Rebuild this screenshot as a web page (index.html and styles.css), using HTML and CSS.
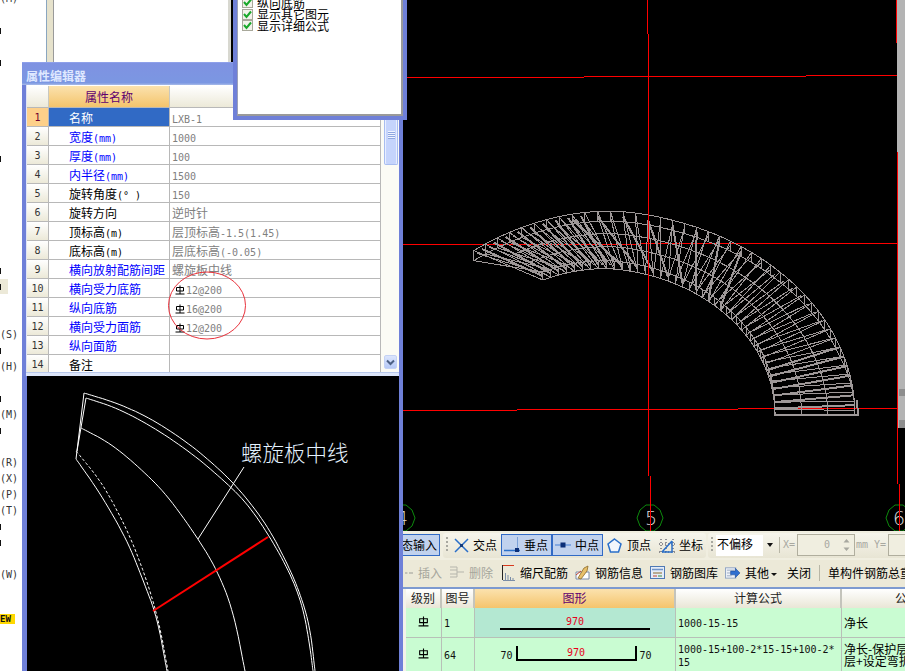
FILE: index.html
```html
<!DOCTYPE html>
<html lang="zh">
<head>
<meta charset="utf-8">
<title>属性编辑器</title>
<link rel="stylesheet" href="styles.css">
</head>
<body>
<svg class="defs" width="0" height="0" aria-hidden="true">
  <symbol id="grade" viewBox="0 0 10 10"><path d="M5 .5V9M1.500 2.500H8.500V6H1.500ZM.5 9H9.500" fill="none" stroke="#000" stroke-width="1"/></symbol>
</svg>
<div class="app">
  <section class="left">
    <div class="strip">
      <div class="m">(M)</div><div class="m"></div><div class="m"><i></i></div><div class="m"></div><div class="m"><i></i></div>
      <div class="m"></div><div class="m"></div><div class="m"></div><div class="m"></div><div class="m"></div>
      <div class="m"><i></i></div><div class="m"></div><div class="m"></div><div class="m"></div><div class="m"></div>
      <div class="m"></div><div class="m"></div><div class="m"><i></i></div><div class="m hot"><i></i></div><div class="m"></div>
      <div class="m"></div><div class="m">(S)</div><div class="m"><i></i></div><div class="m">(H)</div><div class="m"></div>
      <div class="m"><i></i></div><div class="m">(M)</div><div class="m"><i></i></div><div class="m"></div><div class="m">(R)</div>
      <div class="m">(X)</div><div class="m">(P)</div><div class="m">(T)</div><div class="m"><i></i></div><div class="m"><i></i></div>
      <div class="m"></div><div class="m">(W)</div><div class="m"></div><div class="m short"></div><div class="m"><b class="ew">EW</b></div>
    </div>

    <div class="backpanel"><div class="backwhite"></div></div>

    <div class="propwin">
      <div class="title">属性编辑器</div>
      <div class="gridarea">
        <table class="props">
          <colgroup><col class="c-num"><col class="c-name"><col class="c-val"></colgroup>
          <tr class="hd"><th class="corner"></th><th class="hd-on">属性名称</th><th></th></tr>
          <tr><td class="n n-on">1</td><td class="k k-on">名称</td><td class="v"><span class="l">LXB-1</span></td></tr>
          <tr><td class="n">2</td><td class="k blue">宽度<span class="l">(mm)</span></td><td class="v"><span class="l">1000</span></td></tr>
          <tr><td class="n">3</td><td class="k blue">厚度<span class="l">(mm)</span></td><td class="v"><span class="l">100</span></td></tr>
          <tr><td class="n">4</td><td class="k blue">内半径<span class="l">(mm)</span></td><td class="v"><span class="l">1500</span></td></tr>
          <tr><td class="n">5</td><td class="k">旋转角度<span class="l">(° )</span></td><td class="v"><span class="l">150</span></td></tr>
          <tr><td class="n">6</td><td class="k">旋转方向</td><td class="v">逆时针</td></tr>
          <tr><td class="n">7</td><td class="k">顶标高<span class="l">(m)</span></td><td class="v">层顶标高<span class="l">-1.5(1.45)</span></td></tr>
          <tr><td class="n">8</td><td class="k">底标高<span class="l">(m)</span></td><td class="v">层底标高<span class="l">(-0.05)</span></td></tr>
          <tr><td class="n">9</td><td class="k blue">横向放射配筋间距</td><td class="v">螺旋板中线</td></tr>
          <tr><td class="n">10</td><td class="k blue">横向受力底筋</td><td class="v"><svg class="gr"><use href="#grade"/></svg><span class="l">12@200</span></td></tr>
          <tr><td class="n">11</td><td class="k blue">纵向底筋</td><td class="v"><svg class="gr"><use href="#grade"/></svg><span class="l">16@200</span></td></tr>
          <tr><td class="n">12</td><td class="k blue">横向受力面筋</td><td class="v"><svg class="gr"><use href="#grade"/></svg><span class="l">12@200</span></td></tr>
          <tr><td class="n">13</td><td class="k blue">纵向面筋</td><td class="v"></td></tr>
          <tr><td class="n">14</td><td class="k">备注</td><td class="v"></td></tr>
        </table>
        <div class="vscroll">
          <div class="thumb"><span></span><span></span><span></span><span></span></div>
          <div class="spacer"></div>
          <div class="down"><svg width="9" height="7" viewBox="0 0 9 7"><path d="M1 1.500L4.500 5L8 1.500" fill="none" stroke="#4d6185" stroke-width="2"/></svg></div>
        </div>
        <svg class="ring" width="80" height="70" viewBox="0 0 80 70"><ellipse cx="40" cy="34.500" rx="38.500" ry="33.500" fill="none" stroke="#e9323c" stroke-width="1"/></svg>
      </div>
      <div class="split"></div>
      <svg class="preview" viewBox="27 376 372 295" width="372" height="295">
        <g fill="none" stroke="#fff" stroke-width="1">
          <polyline class="smooth" points="84,393 117,403 150,418 187,442 217,467 240,490 267,525 287,563 300,593 310,627 315,671"/>
          <polyline class="smooth" points="86,398 117,408 153,427 190,452 220,477 247,503 270,537 290,573 303,607 310,647 313,671"/>
          <polyline points="84,393 76,459"/>
          <polyline points="86,398 77,451"/>
          <polyline class="smooth" points="81,428 110,443 140,468 167,495 197,537 217,570 233,610 245,671"/>
          <polyline class="smooth" points="76,459 100,493 127,540 143,580 157,617 167,671"/>
          <polyline class="smooth" stroke-dasharray="3 2" points="76,451 100,480 117,510 133,543 150,590 160,627 168,671"/>
          <line x1="244" y1="467" x2="198" y2="539"/>
        </g>
        <line x1="153" y1="611" x2="268" y2="537" stroke="#ff0000" stroke-width="2"/>
        <text class="anno" x="241" y="461">螺旋板中线</text>
      </svg>
    </div>
  </section>

  <section class="right">
    <svg id="cad" class="cad" viewBox="403 0 502 531" width="502" height="531">
      <rect x="897" y="0" width="8" height="428" fill="#b4b4b4"/>
      <rect x="899" y="389" width="6" height="7" fill="#8e8e8e"/>
      <rect x="899" y="420" width="6" height="8" fill="#8e8e8e"/>
      <g stroke="#ff0000" stroke-width="1" shape-rendering="crispEdges" fill="none">
        <path d="M403 77.500H584M584 76.500H806M806 75.500H897"/>
        <path d="M403 244.500H640M640 243.500H897"/>
        <path d="M403 410.500H517M517 409.500H738M738 408.500H897"/>
        <path d="M647.500 0V34M648.500 34V476M650.500 476V531"/>
        <path d="M896.500 0V43M897.500 152V484M899.500 484V531"/>
      </g>
      <g id="wire" fill="none" stroke="#9e9898" stroke-width="1" shape-rendering="crispEdges"></g>
      <path d="M648.500 200V290" stroke="#ff0000" stroke-width="1" shape-rendering="crispEdges"/>
      <g fill="none" stroke="#0d8a0d" stroke-width="1">
        <polygon points="415,518 412,526 406,531 398,531 392,526 389,518 392,510 398,505 406,505 412,510"/>
        <polygon points="663,518 660,526 654,531 646,531 640,526 637,518 640,510 646,505 654,505 660,510"/>
        <polygon points="912,518 909,526 903,531 895,531 889,526 886,518 889,510 895,505 903,505 909,510"/>
      </g>
      <g class="axis">
        <text x="396" y="525">4</text>
        <text x="645" y="525">5</text>
        <text x="893" y="525">6</text>
      </g>
      <path d="M650.500 476V531M899.500 484V531" stroke="#ff0000" stroke-width="1" shape-rendering="crispEdges"/>
    </svg>

    <div class="tb1">
      <div class="on clipped">动态输入</div>
      <div class="grp g1">
        <span class="grip"></span>
        <div class="tool t-cross">
          <svg width="15" height="15" viewBox="0 0 15 15"><path d="M1 1L14 14M14 1L1 14" stroke="#2a6fc9" stroke-width="1.500"/><rect x="6" y="6" width="3" height="3" fill="#123a7a"/></svg>交点
        </div>
        <div class="tool on t-on first">
          <svg width="16" height="16" viewBox="0 0 16 16"><path d="M0 13.500H16" stroke="#2a6fc9" stroke-width="1.500"/><path d="M13.500 0V13" stroke="#7aa0d8" stroke-width="1"/><rect x="11" y="11" width="4" height="4" fill="#0c2f78"/></svg>垂点
        </div>
        <div class="tool on t-on">
          <svg width="16" height="16" viewBox="0 0 16 16"><path d="M0 8H16" stroke="#6d9ade" stroke-width="1.500"/><rect x="5.500" y="5.500" width="5" height="5" fill="#0c2f78"/></svg>中点
        </div>
        <div class="tool t-pent">
          <svg width="15" height="15" viewBox="0 0 15 15"><path d="M7.500 1L14 6L11.500 14H3.500L1 6Z" fill="#f3f6fb" stroke="#2a6fc9" stroke-width="1.500"/></svg>顶点
        </div>
        <div class="tool t-coord">
          <svg width="16" height="17" viewBox="0 0 16 17"><path d="M2 2V15M7 2V15M14 2V15M0 15H16M0 7H16" stroke="#334" stroke-width="1" stroke-dasharray="1 2"/><path d="M3 15L13 4M3 15H14M13 4V14" fill="none" stroke="#2a6fc9" stroke-width="1.500"/></svg>坐标
        </div>
      </div>
      <div class="grp g2">
        <span class="grip"></span>
        <div class="select">不偏移</div>
        <div class="caret"></div>
        <span class="vsep"></span>
        <span class="dim l xlabel">X=</span>
        <div class="num"><span class="numv l">0</span><span class="spin"><svg width="7" height="14" viewBox="0 0 7 14"><path d="M3.500 1L6.500 4.500H.5ZM3.500 13L.5 9.500H6.500Z" fill="#a8a8a0"/></svg></span></div>
        <span class="dim l mm">mm</span>
        <span class="dim l ylabel">Y=</span>
        <div class="num"></div>
      </div>
    </div>

    <div class="tb2">
      <div class="it off">
        <svg class="i8" width="8" height="14" viewBox="0 0 10 14"><path d="M0 7H3M5 7H10" stroke="#b5b5ac" stroke-width="2"/></svg>插入
      </div>
      <div class="it off">
        <svg width="15" height="15" viewBox="0 0 15 15"><path d="M1 2H8V12H1M1 5H8M1 9H8M8 7H15" fill="none" stroke="#b5b5ac" stroke-width="1"/></svg>删除
      </div>
      <div class="it">
        <svg width="15" height="17" viewBox="0 0 15 17"><path d="M2.500 1V16" stroke="#222"/><path d="M3 1.500H14" stroke="#d83a1e"/><path d="M5.500 9V16M8 11V16M10.500 13V16M13 14V16M3 16.500H15" stroke="#7a8da8"/></svg>缩尺配筋
      </div>
      <div class="it">
        <svg width="15" height="15" viewBox="0 0 15 15"><path d="M1 7H14V14H1Z" fill="#fff" stroke="#7d8ca8"/><path d="M3 13L9 3L13 1L12 6L6 14Z" fill="#e8c06a" stroke="#8c6a2a" stroke-width=".8"/><path d="M1 10L6 6" stroke="#c2452e"/></svg>钢筋信息
      </div>
      <div class="it">
        <svg width="15" height="15" viewBox="0 0 15 15"><rect x=".5" y="1.500" width="14" height="12" fill="#e4ecf8" stroke="#4f79b4"/><path d="M2 4.500H13" stroke="#6f93c8" stroke-width="1.500"/><path d="M3 8H12" stroke="#8a6a2a"/><path d="M3 11H7" stroke="#c2452e"/><path d="M8 11H12" stroke="#3a8a3a"/></svg>钢筋图库
      </div>
      <div class="it">
        <svg class="i16" width="15" height="15" viewBox="0 0 16 15"><rect x=".5" y="2.500" width="11" height="11" fill="#eef2f8" stroke="#8fa3c2"/><path d="M2 5H10M2 8H7M2 11H7" stroke="#9aa9c0"/><path d="M6 6H11V3L16 8L11 13V10H6Z" fill="#2f6fd0" stroke="#1d4a94" stroke-width=".6"/></svg><span>其他<span class="tri"></span></span>
      </div>
      <div class="it close">关闭</div>
      <span class="bar"></span>
      <div class="it total">单构件钢筋总重</div>
    </div>

    <div class="rebar">
      <table class="bars">
        <colgroup><col class="b1"><col class="b2"><col class="b3"><col class="b4"><col class="b5"></colgroup>
        <tr class="bh"><th>级别</th><th>图号</th><th class="bh-on">图形</th><th>计算公式</th><th>公式描述</th></tr>
        <tr class="r1">
          <td class="ctr"><svg class="gr gr-b"><use href="#grade"/></svg></td><td><span class="l d">1</span></td>
          <td class="sel"><div class="shape"><span class="l red">970</span><div class="stick"></div></div></td>
          <td><span class="l d">1000-15-15</span></td><td>净长</td>
        </tr>
        <tr class="r2">
          <td class="ctr"><svg class="gr gr-b"><use href="#grade"/></svg></td><td><span class="l d">64</span></td>
          <td><div class="shape2"><span class="l d">70</span><div class="bracket"><span class="l red">970</span></div><span class="l d">70</span></div></td>
          <td class="wrap"><span class="l d">1000-15+100-2*15-15+100-2*<br>15</span></td>
          <td class="wrap">净长-保护层<br>层+设定弯折</td>
        </tr>
      </table>
    </div>
  </section>

  <aside class="dialog">
    <div class="dialog-in">
      <label class="chk"><span class="box"><svg width="9" height="9" viewBox="0 0 9 9"><path d="M1 4L3.500 7L8 1.500" fill="none" stroke="#19a82a" stroke-width="2"/></svg></span>纵向底筋</label>
      <label class="chk"><span class="box"><svg width="9" height="9" viewBox="0 0 9 9"><path d="M1 4L3.500 7L8 1.500" fill="none" stroke="#19a82a" stroke-width="2"/></svg></span>显示其它图元</label>
      <label class="chk"><span class="box"><svg width="9" height="9" viewBox="0 0 9 9"><path d="M1 4L3.500 7L8 1.500" fill="none" stroke="#19a82a" stroke-width="2"/></svg></span>显示详细公式</label>
    </div>
  </aside>
</div>
<script src="wire.js"></script>
</body>
</html>
```
FILE: styles.css
```css
* { box-sizing: border-box; }
html, body { margin: 0; padding: 0; background: #000; }
body { width: 905px; height: 671px; overflow: hidden; font: 12px/14px "Noto Sans CJK SC", "Liberation Sans", sans-serif; color: #000; }
.defs { position: absolute; }
.l { font-family: "DejaVu Sans Mono", "Liberation Mono", monospace; font-size: 10px; line-height: 10px; }

.app { position: relative; display: grid; grid-template-columns: 403px 502px; width: 905px; height: 671px; overflow: hidden; }
.left { position: relative; background: #fff; overflow: hidden; }
.right { display: flex; flex-direction: column; background: #ece9d8; overflow: hidden; }

/* left menu fragments */
.strip { width: 22px; margin-top: -9px; }
.m { height: 16px; width: 22px; line-height: 16px; font-family: "DejaVu Sans Mono", monospace; font-size: 10px; color: #333; position: relative; display: flex; align-items: center; }
.m i { display: block; width: 1px; height: 6px; background: #111; }
.m.hot { background: linear-gradient(#ece9d8, #ece9d8) 0 0 / 8px 15px no-repeat; }
.m.short { height: 12px; }
.ew { background: #ffd800; color: #111; font: bold 9px/10px "DejaVu Sans Mono", monospace; padding: 0 1px 0 0; width: 15px; }

/* window behind */
.backpanel { position: absolute; left: 46px; top: 0; width: 187px; height: 64px; border-left: 1px solid #8aa6c0; background: #e6e2cc; padding-left: 6px; border-right: 2px solid #000; }
.backwhite { height: 100%; background: #fff; border-left: 1px solid #9a9a9a; border-right: 3px solid #d8d8d0; }

/* property window */
.propwin { position: absolute; left: 22px; top: 62px; width: 381px; height: 609px; display: flex; flex-direction: column; background: #6f80d8; border-left: 4px solid #6f80d8; border-right: 4px solid #6f80d8; }
.title { height: 23px; margin: 0 -4px; padding: 6px 0 0 4px; background: linear-gradient(#7f92e2, #7b97e2 90%, #a8bbe8); color: #dfe8ff; font-weight: 700; font-size: 12px; line-height: 14px; border-top: 1px solid #8ea0ea; }
.gridarea { position: relative; display: flex; height: 287px; flex: none; background: #fff; border-left: 1px solid #dfe4f4; padding-top: 1px; overflow: hidden; }
.props { width: 354px; table-layout: fixed; border-collapse: separate; border-spacing: 0; align-self: flex-start; flex: none; }
.c-num { width: 22px; } .c-name { width: 121px; } .c-val { width: 211px; }
.props tr { height: 19px; }
.props .hd { height: 22px; }
.props th { padding: 0; font-weight: 400; background: linear-gradient(#fff, #ece9d8); border-right: 1px solid #c8c8c0; border-bottom: 1px solid #b8b8b8; }
.props .hd-on { background: linear-gradient(#fbe2ae, #f4c46c); color: #5f0070; }
.props td { padding: 2px 0 0; white-space: nowrap; overflow: hidden; height: 19px; border-right: 1px solid #b8b8b8; border-bottom: 1px solid #b8b8b8; line-height: 14px; vertical-align: middle; }
.n { text-align: center; background: linear-gradient(#fff, #ece9d8); font-family: "DejaVu Sans Mono", monospace; font-size: 10px; color: #333; }
.n-on { background: #fdd08a; color: #700030; }
.k { padding-left: 20px !important; }
.k-on { background: #316ac5; color: #fff; }
.blue { color: #0000ff; }
.v { padding-left: 2px !important; color: #808080; }
.gr { width: 10px; height: 10px; vertical-align: -1px; margin: 0 1px 0 3px; }
.vscroll { width: 18px; display: flex; flex-direction: column; background: #fbfbf5; padding: 0 1px 2px 3px; margin-left: 0; }
.thumb { height: 57px; margin-top: 22px; flex: none; background: #c5d4fc; border: 1px solid #a8bdf0; border-top: 0; border-radius: 0 0 2px 2px; display: flex; flex-direction: column; gap: 1px; align-items: center; justify-content: flex-end; padding-bottom: 26px; box-shadow: inset 1px 0 #e8eeff, inset -1px 0 #e8eeff; }
.thumb span { width: 7px; height: 1px; background: #f0f4ff; box-shadow: 0 1px #8fa8e0; }
.spacer { flex: 1; }
.down { height: 14px; margin-right: 1px; margin-bottom: 1px; background: linear-gradient(#dbe5fd, #b6c9f7); border: 1px solid #c4d2f4; border-radius: 2px; display: flex; align-items: center; justify-content: center; }
.ring { position: absolute; left: 140px; top: 186px; }
.split { height: 4px; flex: none; background: #dde6fa; border-top: 1px solid #b8c8ec; }
.preview { display: block; background: #000; flex: none; margin-left: 1px; }
.anno { font-size: 21.500px; fill: #e4f2ff; font-family: "Noto Sans CJK SC", sans-serif; font-weight: 300; }

/* top floating dialog */
.dialog { position: absolute; left: 233px; top: 0; width: 174px; height: 120px; background: #6f80d8; padding: 0 4px 4px 4px; }
.dialog-in { height: 100%; background: #fff; border-right: 2px solid #9a9a9a; border-bottom: 2px solid #9a9a9a; border-left: 1px solid #9aa0b8; padding: 0 0 0 4px; margin-top: 0; overflow: hidden; }
.chk { display: flex; align-items: center; gap: 4px; height: 11.500px; line-height: 12px; font-size: 12px; }
.chk:first-child { margin-top: -3px; }
.box { width: 11px; height: 11px; border: 1px solid #a8a89a; background: #f2f2ea; display: flex; align-items: center; justify-content: center; flex: none; }

/* cad canvas */
.cad { display: block; background: #000; flex: none; }
.axis text { font: 19px "DejaVu Sans", sans-serif; fill: #dcdcdc; font-weight: 300; }

/* toolbars */
.tb1 { height: 29px; flex: none; display: flex; align-items: center; background: #f0eee0; padding-bottom: 1px; overflow: hidden; }
.on { background: #c1d2ee; border: 1px solid #316ac5; height: 22px; }
.clipped { margin-left: -14px; width: 51px; line-height: 20px; border-left: 0; text-align: left; flex: none; padding-left: 0; }
.grp { display: flex; align-items: center; height: 25px; background: linear-gradient(#f6f5ec, #e8e5d4); border-radius: 3px; flex: none; }
.g1 { margin-left: 3px; width: 263px; padding-left: 3px; }
.g2 { margin-left: 2px; flex: 1; padding-left: 3px; }
.grip { width: 2px; height: 16px; flex: none; background: repeating-linear-gradient(#a8a8a0 0 2px, transparent 2px 4px); }
.tool { display: flex; align-items: center; gap: 4px; flex: none; line-height: 20px; }
.t-cross { margin-left: 6px; }
.t-on { width: 51px; padding-left: 2px; }
.t-on.first { margin-left: 4px; }
.t-pent { margin-left: 4px; gap: 5px; }
.t-coord { margin-left: 8px; }
.select { margin-left: 3px; width: 47px; height: 21px; background: #fff; line-height: 17px; padding-left: 1px; flex: none; }
.caret { width: 0; height: 0; margin-left: 4px; border: 3px solid transparent; border-top: 4px solid #111; border-bottom: 0; flex: none; }
.vsep { width: 1px; height: 16px; background: #b8b6a6; margin-left: 6px; flex: none; }
.dim { color: #a8a8a0; flex: none; }
.xlabel { margin-left: 3px; width: 14px; }
.num { width: 58px; height: 22px; margin-left: 0; border: 1px solid #b0ae9e; background: #f0eee0; display: flex; align-items: center; justify-content: flex-end; flex: none; }
.numv { color: #a8a8a0; margin-right: 13px; }
.spin { width: 9px; display: flex; margin-right: 2px; }
.mm { margin-left: 1px; width: 17px; }
.ylabel { margin-left: 1px; width: 14px; }

.tb2 { height: 27px; flex: none; display: flex; align-items: center; gap: 7px; padding: 0 0 2px 2px; background: #ece9d8; overflow: hidden; }
.it { display: flex; align-items: center; gap: 5px; flex: none; line-height: 16px; white-space: nowrap; }
.it svg { overflow: visible; flex: none; }
.off { color: #a6a69c; }
.tri { display: inline-block; width: 0; height: 0; margin-left: 2px; vertical-align: 2px; border: 3px solid transparent; border-top: 3px solid #111; border-bottom: 0; }
.close { margin-left: 3px; }
.bar { width: 1px; height: 16px; background: #b8b6a6; margin-left: 1px; flex: none; }
.total { margin-left: 1px; }

/* rebar table */
.rebar { flex: 1; background: #f4f3ea; border-top: 2px solid #7d9ad0; padding: 0 0 0 3px; overflow: hidden; }
.bars { width: 592px; table-layout: fixed; border-collapse: separate; border-spacing: 0; }
.b1 { width: 36px; } .b2 { width: 33px; } .b3 { width: 201px; } .b4 { width: 166px; } .b5 { width: 156px; }
.bars th { height: 19px; padding: 0 0 2px; font-weight: 400; background: linear-gradient(#fff, #e9e6d6); border-right: 2px solid #c4c4bc; line-height: 16px; color: #222; }
.bars .bh-on { background: linear-gradient(#fbe2ae, #f4c46c); color: #5f0070; }
.bars td { padding: 0 0 0 2px; background: #c9fcd2; border-right: 1px solid #b8c0b8; border-bottom: 1px solid #b8c0b8; overflow: hidden; white-space: nowrap; line-height: 12px; }
.bars .r1 td { height: 30px; }
.bars .r2 td { height: 34px; }
.bars td.sel { background: #b4e8d2; padding: 0; }
.bars td.ctr { text-align: center; padding: 0 0 3px; }
.gr-b { width: 11px; height: 11px; margin: 0; }
.d { color: #111; }
.red { color: #e8001c; }
.shape { width: 150px; margin: 0 auto; text-align: center; line-height: 10px; }
.stick { height: 2px; background: #000; margin-top: 1px; }
.shape2 { display: flex; align-items: flex-end; justify-content: center; gap: 3px; padding-bottom: 3px; }
.bracket { width: 121px; height: 15px; border: 2px solid #000; border-top: 0; text-align: center; line-height: 10px; }
```
FILE: wire.js
```js
(function () {
  var wire = document.getElementById('wire');
  var NS = 'http://www.w3.org/2000/svg';

  function pt(u, r, lift) {
    var deg = (106 + 10 * r) * u;
    var th = deg * Math.PI / 180;
    var cx = 593 - 3 * r, a = 182 + 83 * r, b = 147 + 58 * r;
    var x = cx + a * Math.cos(th);
    var y = 415 - b * Math.sin(th);
    var over = Math.max(0, (deg - 82) / 32);
    y += (10 + 8 * r) * Math.pow(over, 1.6);
    var l = lift || 0;
    return [x, y + l * Math.min(1, u * 6 + (l < 0 ? 0.4 : 0))];
  }
  function add(points, width) {
    var el = document.createElementNS(NS, 'polyline');
    el.setAttribute('points', points.map(function (p) { return p[0].toFixed(1) + ',' + p[1].toFixed(1); }).join(' '));
    if (width) el.setAttribute('stroke-width', width);
    wire.appendChild(el);
  }
  function arc(r, lift, from, to) {
    var pts = [], s = 60;
    for (var i = 0; i <= s; i++) pts.push(pt(from + (to - from) * i / s, r, lift));
    add(pts);
  }

  arc(1, 0, 0, 1);
  arc(1, 10, 0, 1);
  arc(0, 0, 0, 1);
  arc(0, -8, 0, 1);
  arc(0.33, -3, 0, 0.98);
  arc(0.66, 3, 0, 0.98);

  var n = 42;
  for (var i = 0; i <= n; i++) {
    var u = i / n, next = (i + 1) / n;
    add([pt(u, 0, 0), pt(u, 1, 0)], i < 8 ? 2 : 1);
    add([pt(u, 0, 0), pt(u, 0, -8)]);
    add([pt(u, 1, 0), pt(u, 1, 10)]);
    if (i >= n) continue;
    if (u < 0.4) {
      add([pt(u + 0.5 / n, 0, -5), pt(u + 0.5 / n, 1, 5)]);
    } else if (u < 0.78) {
      if (i % 2 === 0) add([pt(u, 0, -4), pt(u + 2 / n, 1, 5)], 2);
      add([pt(next, 0, -2), pt(u, 1, 4)]);
    } else {
      add([pt(u, 0, -8), pt(u, 1, 10)]);
      add([pt(u + 0.5 / n, 0, -4), pt(u + 0.7 / n, 1, 5)]);
      add([pt(next, 0, -4), pt(u + 0.3 / n, 1, 3)], 2);
    }
  }
  add([pt(1, 0, 0), pt(1, 1, 0), pt(1, 1, 10), pt(1, 0, -8)]);
  add([[774, 415], [858, 415], [857, 400]], 2);

  // round off the hand-measured curves of the preview drawing
  var smooth = document.querySelectorAll('.smooth');
  for (var k = 0; k < smooth.length; k++) {
    var line = smooth[k], p = [];
    for (var j = 0; j < line.points.length; j++) p.push([line.points[j].x, line.points[j].y]);
    for (var pass = 0; pass < 3; pass++) {
      var q = [p[0]];
      for (var m = 0; m < p.length - 1; m++) {
        q.push([0.75 * p[m][0] + 0.25 * p[m + 1][0], 0.75 * p[m][1] + 0.25 * p[m + 1][1]]);
        q.push([0.25 * p[m][0] + 0.75 * p[m + 1][0], 0.25 * p[m][1] + 0.75 * p[m + 1][1]]);
      }
      q.push(p[p.length - 1]);
      p = q;
    }
    line.setAttribute('points', p.map(function (a) { return a[0].toFixed(1) + ',' + a[1].toFixed(1); }).join(' '));
  }
})();
```
